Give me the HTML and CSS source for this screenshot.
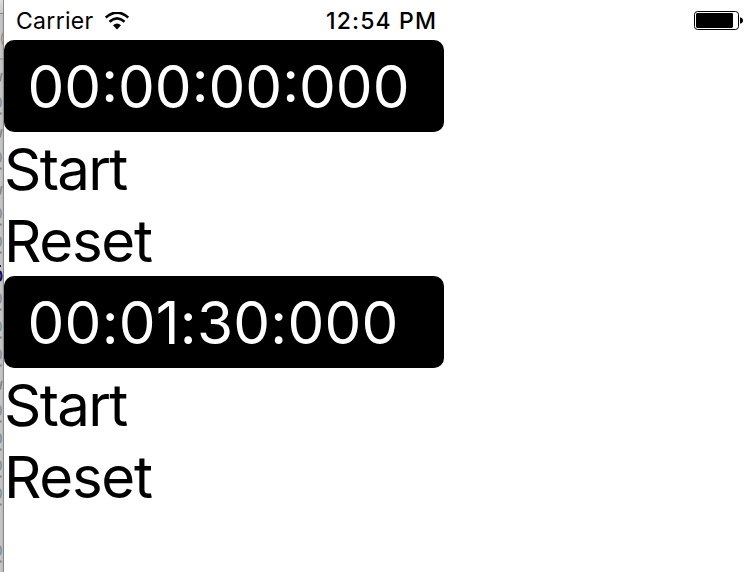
FILE: index.html
```html
<!DOCTYPE html>
<html lang="en">
<head>
<meta charset="utf-8">
<title>Timers</title>
<link rel="stylesheet" href="styles.css">
</head>
<body>
<div class="desktop">
  <svg class="behind" width="4" height="572" viewBox="0 0 4 572" aria-hidden="true">
    <defs>
      <linearGradient id="bar" x1="0" y1="0" x2="0" y2="1"><stop offset="0" stop-color="#dedede"/><stop offset="1" stop-color="#c8c8c8"/></linearGradient>
      <linearGradient id="shade"><stop offset="0" stop-color="#c9c9c9"/><stop offset=".7" stop-color="#bababa"/><stop offset=".76" stop-color="#8d8d8d"/><stop offset="1" stop-color="#858585"/></linearGradient>
      <path id="v" d="M0 8.5L1.8 0" stroke="#808891" stroke-width="1.8"/>
      <g id="o"><path d="M0 0Q2.4 4.5 0 9" fill="none" stroke="#8795a5" stroke-width="1.8"/><path d="M0 15.5H1.6" stroke="#808080" stroke-width="1.8"/></g>
    </defs>
    <rect width="4" height="572" fill="url(#shade)"/>
    <rect width="3" height="13" fill="url(#bar)"/>
    <path d="M0 13.5H4M0 59H4" stroke="#858585"/>
    <path d="M3 33Q0 39 3 45" fill="none" stroke="#9a8c7c" stroke-width="1.3"/>
    <use href="#v" y="73"/><use href="#o" y="98"/>
    <use href="#v" y="129"/><use href="#o" y="153"/>
    <use href="#v" y="186"/><use href="#o" y="209"/><use href="#o" y="237"/>
    <path d="M0 266H1M0 271Q3 276 0 281" fill="none" stroke="#101060" stroke-width="2.2"/>
    <use href="#o" y="294"/><use href="#o" y="322"/><use href="#o" y="350"/>
    <use href="#v" y="381"/><use href="#o" y="406"/><use href="#o" y="434"/><use href="#o" y="461"/><use href="#o" y="489"/><use href="#o" y="546"/>
  </svg>
  <main class="screen">
    <header class="status">
      <div class="network">
        <span class="carrier">Carrier</span>
        <svg class="wifi" width="24" height="18" viewBox="0 0 24 18" aria-hidden="true">
          <path d="M.7 5.6Q12 -4.4 23.3 5.6M4.5 9.7Q12 3.2 19.5 9.7" fill="none" stroke="#000" stroke-width="2.6"/>
          <path d="M8 13.2Q12 9.9 16 13.2L12 17.4Z"/>
        </svg>
      </div>
      <span class="clock">12:54 PM</span>
      <svg class="battery" width="50" height="20" viewBox="0 0 50 20" aria-hidden="true">
        <rect x=".5" y=".5" width="44" height="18" rx="3" fill="#fff" stroke="#000"/>
        <rect x="2" y="2" width="37" height="15" rx="1.4"/>
        <path d="M46 6.2Q49 7 49 9.5T46 12.8Z"/>
      </svg>
    </header>
    <section class="timer">
      <div class="display first">00:00:00:000</div>
      <div class="action start">Start</div>
      <div class="action reset">Reset</div>
    </section>
    <section class="timer">
      <div class="display second">00:01:30:000</div>
      <div class="action start">Start</div>
      <div class="action reset">Reset</div>
    </section>
  </main>
</div>
</body>
</html>
```
FILE: styles.css
```css
body {
  margin: 0;
  background: #fff;
  color: #000;
  font-family: Inter, "Liberation Sans", sans-serif;
}
.desktop {
  display: flex;
  width: 754px;
  height: 572px;
  overflow: hidden;
}
.behind {
  flex: none;
}
.screen {
  width: 750px;
}
.status {
  display: grid;
  grid-template-columns: 322px 1fr 60px;
  align-items: center;
  height: 40px;
  line-height: 42px;
}
.network {
  display: flex;
  align-items: center;
  padding-left: 12px;
  gap: 12px;
}
.carrier {
  font-size: 23px;
  width: 77px;
  letter-spacing: 0.3px;
  white-space: nowrap;
}
.clock {
  font-size: 23px;
  font-weight: 550;
  letter-spacing: 1.15px;
  white-space: nowrap;
}
.display {
  box-sizing: border-box;
  width: 440px;
  height: 92px;
  padding: 11px 23.5px 9px;
  border-radius: 10px;
  background: #000;
  color: #fff;
  font-size: 58.4px;
  line-height: 72px;
  white-space: nowrap;
}
.second {
  letter-spacing: 0.25px;
}
.action {
  box-sizing: border-box;
  height: 72px;
  padding-top: 1px;
  font-size: 58.2px;
  line-height: 72px;
}
.start {
  letter-spacing: -1.7px;
}
.reset {
  letter-spacing: -1.3px;
}
```
